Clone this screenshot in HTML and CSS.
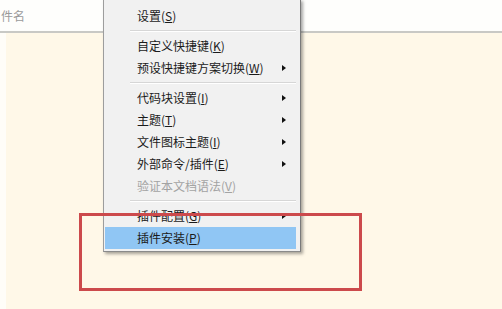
FILE: index.html
```html
<!DOCTYPE html>
<html>
<head>
<meta charset="utf-8">
<link rel="stylesheet" href="styles.css">
</head>
<body>
<div class="page">
  <div class="header"><span class="colname">件名</span></div>
  <div class="content"></div>

  <div class="menu">
    <div class="item">设置(<u>S</u>)</div>
    <div class="sep"></div>
    <div class="item">自定义快捷键(<u>K</u>)</div>
    <div class="item sub">预设快捷键方案切换(<u>W</u>)</div>
    <div class="sep"></div>
    <div class="item sub">代码块设置(<u>I</u>)</div>
    <div class="item sub">主题(<u>T</u>)</div>
    <div class="item sub">文件图标主题(<u>I</u>)</div>
    <div class="item sub">外部命令/插件(<u>E</u>)</div>
    <div class="item disabled">验证本文档语法(<u>V</u>)</div>
    <div class="sep"></div>
    <div class="item sub">插件配置(<u>G</u>)</div>
    <div class="item active">插件安装(<u>P</u>)</div>
  </div>

  <div class="callout"></div>
</div>
</body>
</html>
```

FILE: styles.css
```css
html, body {
  margin: 0;
  padding: 0;
}
body {
  font-family: "Noto Sans CJK SC", "Liberation Sans", sans-serif;
  background: #fff8e8;
}
.page {
  position: relative;
  width: 502px;
  height: 309px;
  overflow: hidden;
  display: flex;
  flex-direction: column;
  background: #fff8e8;
}
.header {
  height: 31px;
  background: #fefefc;
  border-bottom: 2px solid #c9c9c5;
  display: flex;
  align-items: center;
  padding-left: 3px;
}
.colname {
  font-size: 12px;
  color: #9a9a9a;
  margin-left: -2px;
}
.content {
  flex: 1;
  background: #fff8e8;
  border-left: 6px solid #fffdf8;
}
.menu {
  position: absolute;
  left: 103px;
  top: -1px;
  width: 198px;
  box-sizing: border-box;
  background: #f1f1f1;
  border: 1px solid #9d9d9d;
  border-right-color: #7a7a7a;
  border-bottom-color: #8a8a8a;
  padding: 5px 0 2px 0;
  box-shadow: 2px 2px 3px rgba(0, 0, 0, 0.35);
}
.item {
  position: relative;
  height: 22px;
  line-height: 22px;
  margin: 0 4px 0 1px;
  padding-left: 32px;
  font-size: 12px;
  color: #1b1b1b;
  white-space: nowrap;
}
.item u {
  text-underline-offset: 1px;
}
.item.disabled {
  color: #a3a3a3;
}
.item.active {
  background: #90c6f4;
}
.item.sub::after {
  content: "";
  position: absolute;
  right: 10px;
  top: 8px;
  border-left: 4px solid #111;
  border-top: 3.5px solid transparent;
  border-bottom: 3.5px solid transparent;
}
.sep {
  height: 8px;
  margin-left: 26px;
  margin-right: 4px;
  display: flex;
  flex-direction: column;
  justify-content: center;
}
.sep::before {
  content: "";
  display: block;
  height: 1px;
  background: #d6d6d6;
  border-bottom: 1px solid #ffffff;
}
.callout {
  position: absolute;
  left: 79px;
  top: 213px;
  width: 283px;
  height: 78px;
  box-sizing: border-box;
  border: 3px solid #cc4a4c;
}
```
